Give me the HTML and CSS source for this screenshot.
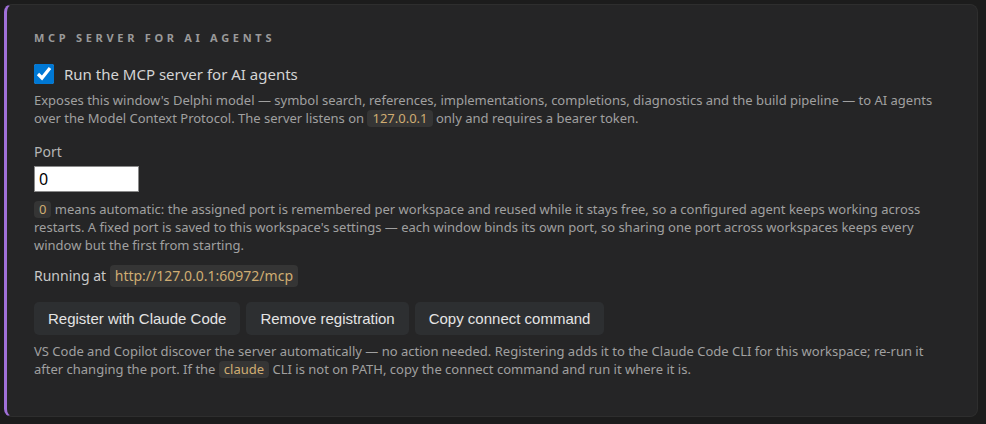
FILE: index.html
```html
<!DOCTYPE html>
<html lang="en">
<head>
<meta charset="UTF-8">
<title>MCP server settings</title>
<link rel="stylesheet" href="styles.css">
</head>
<body>
<div class="card">
    <h2 class="section-title">MCP Server for AI Agents</h2>

    <label class="check-row">
        <input type="checkbox" class="check" checked>
        <span>Run the MCP server for AI agents</span>
    </label>
    <p class="desc">Exposes this window's Delphi model — symbol search, references, implementations, completions, diagnostics and the build pipeline — to AI agents over the Model Context Protocol. The server listens on <code>127.0.0.1</code> only and requires a bearer token.</p>

    <div class="field-label">Port</div>
    <input type="text" class="port-input" value="0">
    <p class="desc help"><code>0</code> means automatic: the assigned port is remembered per workspace and reused while it stays free, so a configured agent keeps working across restarts. A fixed port is saved to this workspace's settings — each window binds its own port, so sharing one port across workspaces keeps every window but the first from starting.</p>

    <div class="status">Running at <code class="url">http://127.0.0.1:60972/mcp</code></div>

    <div class="actions">
        <button class="btn">Register with Claude Code</button>
        <button class="btn">Remove registration</button>
        <button class="btn">Copy connect command</button>
    </div>
    <p class="desc foot">VS Code and Copilot discover the server automatically — no action needed. Registering adds it to the Claude Code CLI for this workspace; re-run it after changing the port. If the <code>claude</code> CLI is not on PATH, copy the connect command and run it where it is.</p>
</div>
</body>
</html>
```

FILE: styles.css
```css
body {
    margin: 0;
    padding: 4px 8px 0 4px;
    background: #1c1c1c;
    font-family: 'Segoe UI', 'Noto Sans', sans-serif;
    color: #cccccc;
}

.card {
    box-sizing: border-box;
    height: 413px;
    background: #252526;
    border: 1px solid #2e2e2e;
    border-left: 3px solid #a070d8;
    border-radius: 8px;
    padding: 25px 27px 0 27px;
}

.section-title {
    margin: 0;
    font-size: 11px;
    line-height: 16px;
    font-weight: 700;
    letter-spacing: 3.7px;
    text-transform: uppercase;
    color: #9a9a9a;
}

.check-row {
    display: flex;
    align-items: center;
    gap: 10px;
    margin-top: 18px;
    height: 20px;
    font-size: 15px;
    color: #d4d4d4;
}

.check {
    width: 20px;
    height: 20px;
    margin: 0;
    accent-color: #0078d4;
}

.desc {
    margin: 7px 0 0 0;
    font-size: 13px;
    line-height: 18px;
    color: #a0a0a0;
}

code {
    display: inline-block;
    font-family: inherit;
    line-height: 17px;
    background: #353535;
    color: #d0ad72;
    padding: 0 5px;
    border-radius: 4px;
}

.field-label {
    margin-top: 15px;
    font-size: 14px;
    line-height: 20px;
    color: #b5b5b5;
}

.port-input {
    display: block;
    box-sizing: border-box;
    width: 105px;
    height: 26px;
    margin-top: 4px;
    padding: 0 4px;
    border: 1px solid #8a8a8a;
    background: #ffffff;
    color: #000;
    font-family: inherit;
    font-size: 16px;
}

.help {
    margin-top: 8px;
}

.status {
    margin-top: 11px;
    font-size: 14px;
    line-height: 22px;
    color: #c8c8c8;
}

.status .url {
    line-height: 22px;
}

.actions {
    display: flex;
    gap: 6px;
    margin-top: 15px;
}

.btn {
    height: 33px;
    padding: 0 14px;
    border: none;
    border-radius: 5px;
    background: #2d2f31;
    color: #e4e4e4;
    font-family: 'Liberation Sans', Arial, sans-serif;
    font-size: 15px;
    cursor: pointer;
}

.foot {
    margin-top: 7px;
}
```
